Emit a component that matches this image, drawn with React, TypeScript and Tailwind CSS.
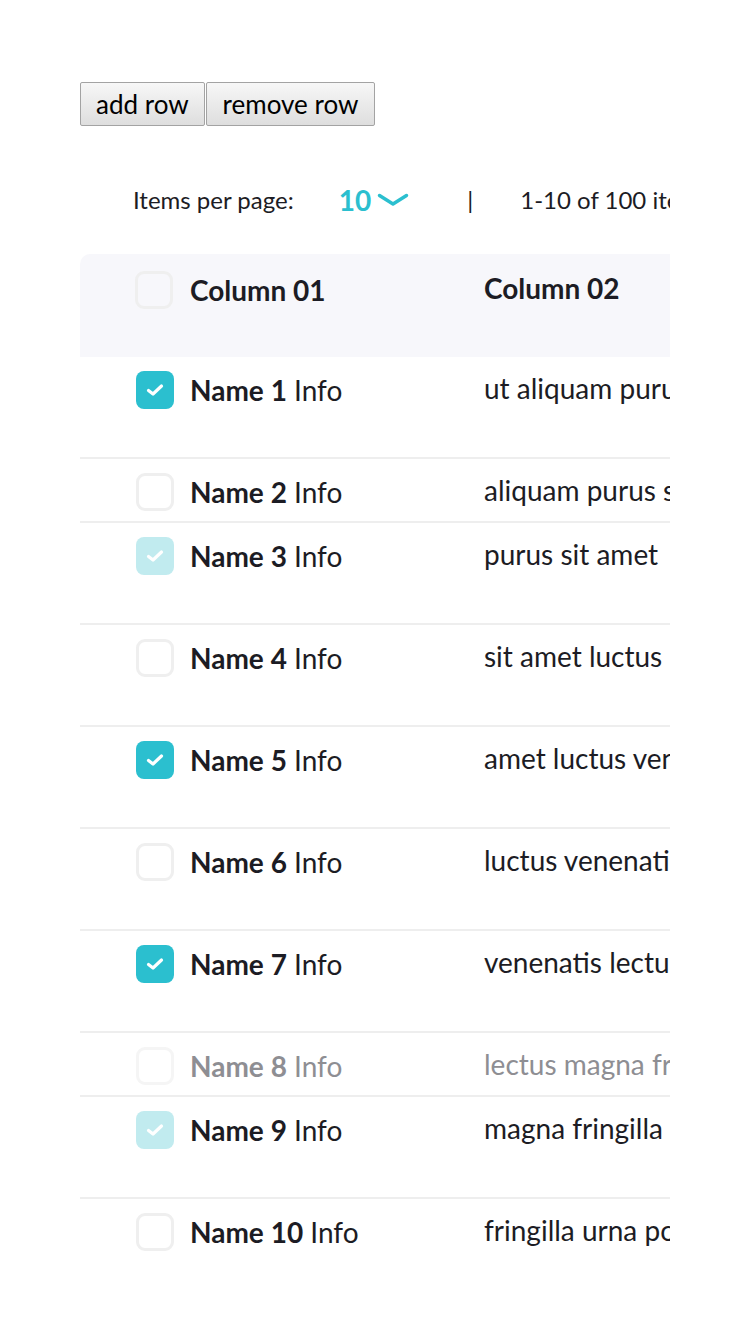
import React from "react";

type Row = { n: number; text: string; state: "on" | "off" | "light" | "disabled"; tall: boolean };

const rows: Row[] = [
  { n: 1, text: "ut aliquam purus sit amet", state: "on", tall: true },
  { n: 2, text: "aliquam purus sit amet luctus", state: "off", tall: false },
  { n: 3, text: "purus sit amet", state: "light", tall: true },
  { n: 4, text: "sit amet luctus", state: "off", tall: true },
  { n: 5, text: "amet luctus venenatis", state: "on", tall: true },
  { n: 6, text: "luctus venenatis lectus", state: "off", tall: true },
  { n: 7, text: "venenatis lectus magna", state: "on", tall: true },
  { n: 8, text: "lectus magna fringilla urna", state: "disabled", tall: false },
  { n: 9, text: "magna fringilla", state: "light", tall: true },
  { n: 10, text: "fringilla urna porttitor", state: "off", tall: true },
];

function Check({ state }: { state: Row["state"] | "header" }) {
  if (state === "on" || state === "light") {
    return (
      <div
        className={
          "w-[38px] h-[38px] rounded-[8px] flex items-center justify-center shrink-0 " +
          (state === "on" ? "bg-[#2bbfcf]" : "bg-[#c1ebef]")
        }
      >
        <svg width="20" height="16" viewBox="0 0 20 16" fill="none">
          <path d="M3.5 8.5 L8 12 L16.5 4" stroke="white" strokeWidth="3.2" strokeLinecap="round" strokeLinejoin="round" />
        </svg>
      </div>
    );
  }
  return (
    <div
      className={
        "w-[38px] h-[38px] rounded-[9px] border-[3px] shrink-0 " +
        (state === "disabled" ? "border-[#f5f5f5]" : "border-[#efefef]")
      }
    />
  );
}

export default function App() {
  return (
    <div className="min-h-[1342px] bg-white pt-[82px] pl-[80px] font-['Lato',sans-serif] text-[#1c1c24]">
      <div className="flex">
        <button className="h-[44px] px-[15px] text-[26px] leading-none text-black border border-[#a3a3a3] rounded-[2px] bg-gradient-to-b from-[#f7f7f7] to-[#dedede]">
          add row
        </button>
        <button className="h-[44px] px-[16px] ml-[1px] text-[26px] leading-none text-black border border-[#a3a3a3] rounded-[2px] bg-gradient-to-b from-[#f7f7f7] to-[#dedede]">
          remove row
        </button>
      </div>

      <div className="w-[590px] overflow-hidden">
        <div className="flex items-center h-[60px] mt-[44px] pl-[53px] text-[24px] whitespace-nowrap w-[900px]">
          <span className="shrink-0">Items per page:</span>
          <span className="ml-[45px] text-[#2bbfcf] font-bold text-[28px] shrink-0">10</span>
          <svg className="ml-[6px] shrink-0" width="32" height="16" viewBox="0 0 32 16" fill="none">
            <path d="M2.5 3.5 L16 12 L29.5 3.5" stroke="#2bbfcf" strokeWidth="3.5" strokeLinecap="round" strokeLinejoin="round" />
          </svg>
          <span className="ml-[58px] shrink-0">|</span>
          <span className="ml-[47px] shrink-0">1-10 of 100 items</span>
        </div>

        <div className="mt-[24px] text-[28px] whitespace-nowrap w-[900px]">
          <div className="flex items-start h-[103px] bg-[#f7f7fb] rounded-tl-[10px] pt-[15px] font-bold">
            <div className="w-[404px] shrink-0 pl-[55px] flex items-center gap-[17px]">
              <Check state="header" />
              <span>Column 01</span>
            </div>
            <div className="flex items-center h-[38px] shrink-0">Column 02</div>
          </div>
          {rows.map((r, i) => {
            const dis = r.state === "disabled";
            const last = i === rows.length - 1;
            return (
              <div
                key={r.n}
                className={
                  "flex items-start pt-[12px] " +
                  (last ? "" : "border-b-2 border-[#eeeeee] ") +
                  (r.tall ? "h-[102px] " : "h-[64px] ") +
                  (dis ? "text-[#8e8e93]" : "")
                }
              >
                <div className="w-[404px] shrink-0 pl-[56px] flex items-center gap-[16px]">
                  <Check state={r.state} />
                  <span>
                    <b>Name {r.n}</b> Info
                  </span>
                </div>
                <div className="flex items-center h-[38px] shrink-0">{r.text}</div>
              </div>
            );
          })}
        </div>
      </div>
    </div>
  );
}
